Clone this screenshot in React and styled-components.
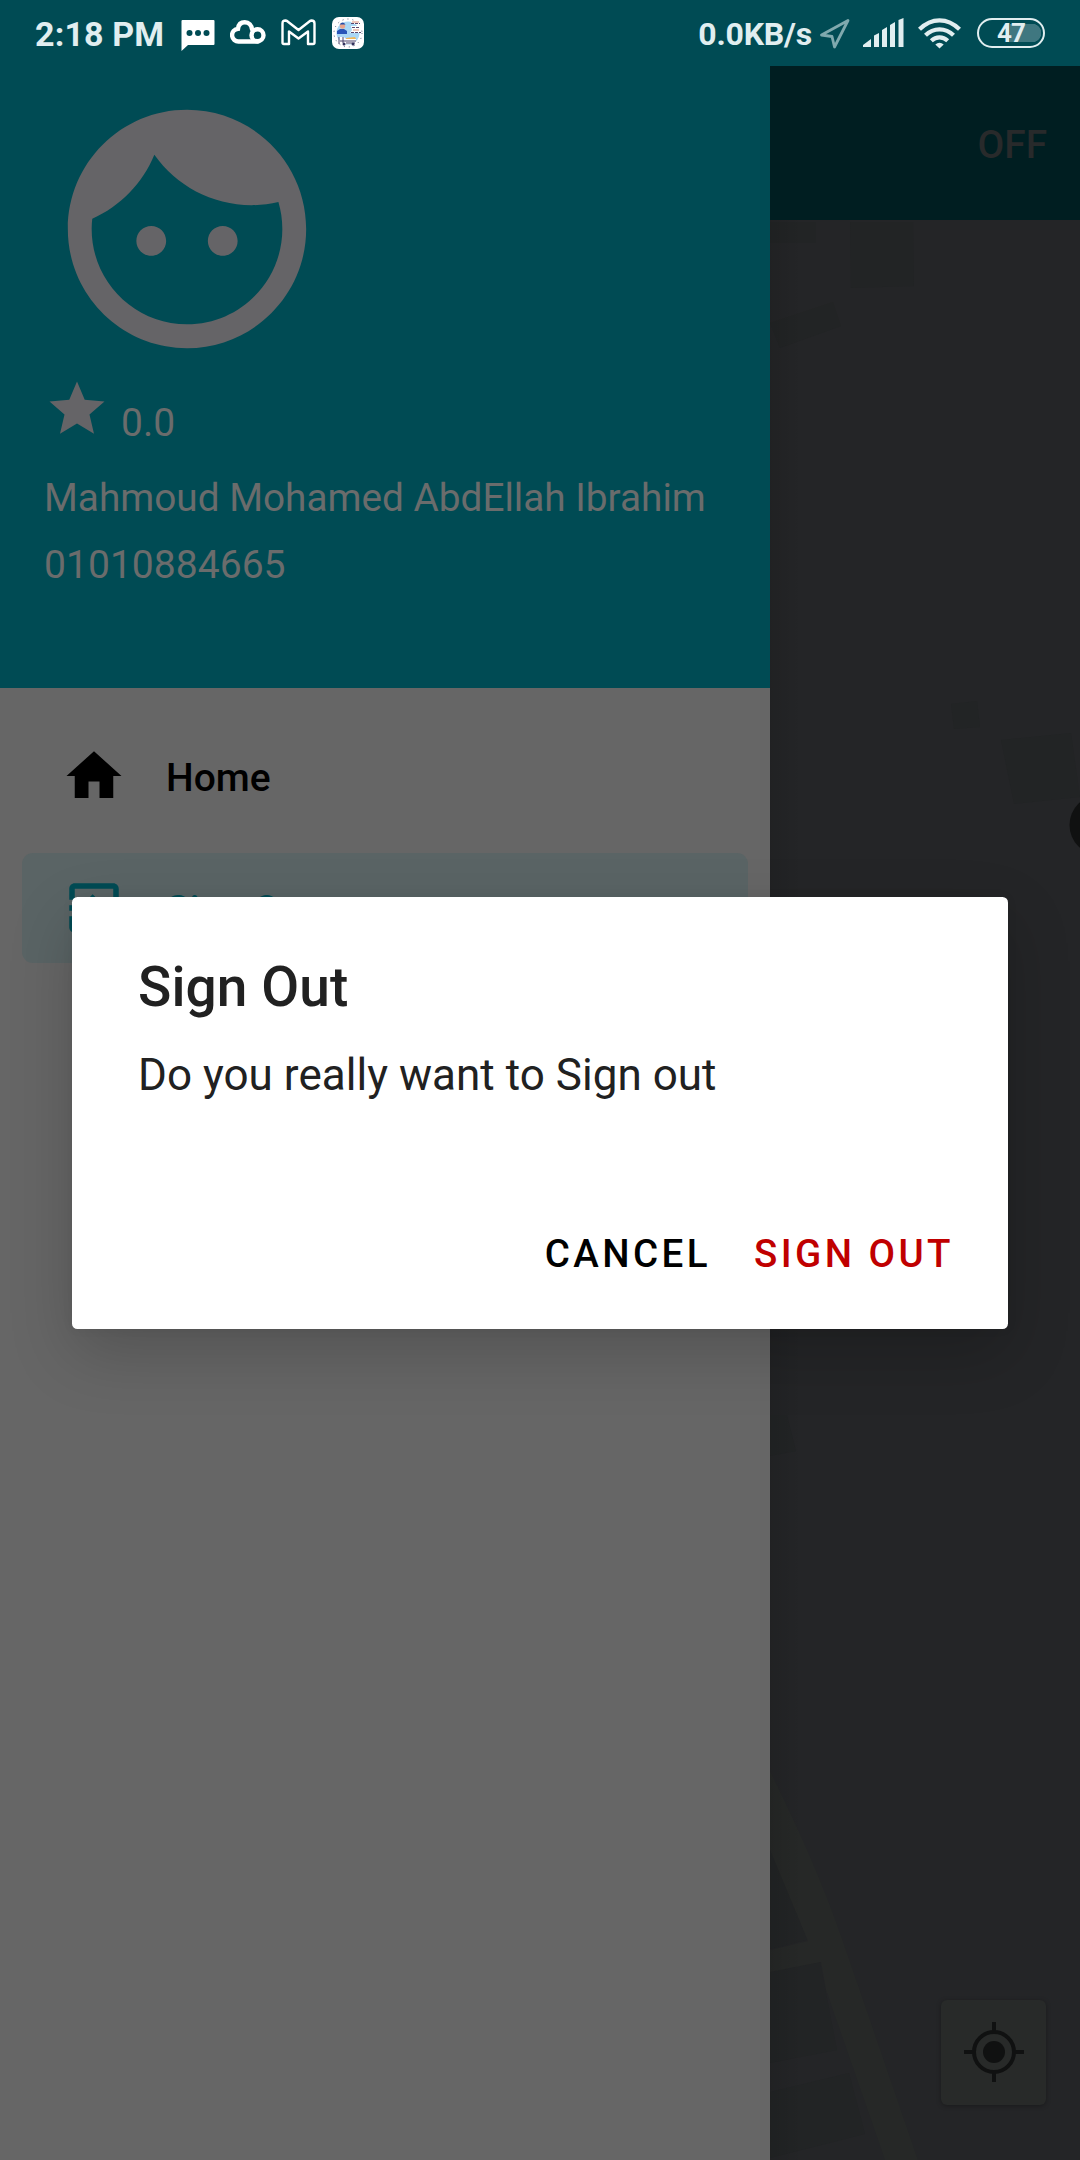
import React from "react";
import styled, { createGlobalStyle } from "styled-components";

const GlobalStyle = createGlobalStyle`
  * { box-sizing: border-box; }
  body { margin: 0; background: #242527; }
`;

const Screen = styled.div`
  position: relative;
  display: flex;
  flex-direction: column;
  width: 1080px;
  height: 2160px;
  overflow: hidden;
  background: #004b54;
  font-family: Roboto, "Noto Sans", sans-serif;
`;

const StatusBar = styled.header`
  display: flex;
  justify-content: space-between;
  height: 66px;
  padding: 0 35px 0 35px;
  color: #e1eef0;
`;

const StatusGroup = styled.div`
  display: flex;
  align-items: flex-start;
`;

const StatusText = styled.span`
  font-size: ${(p) => p.$size}px;
  font-weight: 700;
  line-height: 68px;
  letter-spacing: ${(p) => p.$spacing || 0}px;
  white-space: nowrap;
`;

const StatusIcon = styled.svg`
  display: block;
  flex: none;
  margin: ${(p) => p.$top}px 0 0 ${(p) => p.$left}px;
`;

const Battery = styled.div`
  display: flex;
  align-items: center;
  justify-content: center;
  width: 68px;
  height: 30px;
  margin: 18px 0 0 16px;
  border: 2.5px solid #e1eef0;
  border-radius: 15px;
  background: linear-gradient(#3f7780, #3f7780) 31px center / 22px 18px no-repeat,
    radial-gradient(circle at 50% 50%, #3f7780 0 9px, transparent 9.5px) 44px center / 18px 18px no-repeat;
  font-size: 26px;
  font-weight: 700;
  letter-spacing: -0.8px;
  line-height: 30px;
`;

const Body = styled.div`
  display: flex;
  flex: 1;
`;

const Drawer = styled.nav`
  display: flex;
  flex-direction: column;
  width: 770px;
  background: #666;
`;

const DrawerHeader = styled.div`
  display: flex;
  flex-direction: column;
  align-items: flex-start;
  height: 622px;
  padding: 20px 44px 0;
  background: #004b54;
  color: #6a6c6c;
  font-size: 39px;
  line-height: 45px;
`;

const Rating = styled.div`
  display: flex;
  align-items: flex-start;
  margin-top: 4px;
  height: 66px;
`;

const RatingValue = styled.span`
  margin: 25px 0 0 11px;
`;

const UserLine = styled.div`
  margin-top: ${(p) => p.$gap}px;
  font-size: ${(p) => p.$size}px;
  white-space: nowrap;
`;

const Menu = styled.div`
  display: flex;
  flex-direction: column;
  gap: 22px;
  padding: 33px 22px;
`;

const MenuItem = styled.div`
  display: flex;
  align-items: center;
  gap: 39px;
  height: 110px;
  padding-left: 39px;
  border-radius: 11px;
  background: ${(p) => (p.$active ? "#5a6465" : "transparent")};
  color: ${(p) => (p.$active ? "#004b54" : "#000")};
  font-size: 39px;
  font-weight: 500;
  line-height: 48px;
  svg { display: block; }
  span { padding-top: 3px; }
`;

const Page = styled.main`
  position: relative;
  display: flex;
  flex-direction: column;
  flex: 1;
`;

const Toolbar = styled.div`
  display: flex;
  align-items: center;
  justify-content: flex-end;
  height: 154px;
  padding: 2px 33px 0 0;
  background: #001e21;
  color: #282a2b;
  font-size: 38.8px;
  font-weight: 500;
`;

const MapCanvas = styled.svg`
  display: block;
  flex: 1;
  background: #242527;
`;

const DrawerShadow = styled.div`
  position: absolute;
  inset: 154px auto 0 0;
  width: 32px;
  background: linear-gradient(90deg, rgba(0, 0, 0, 0.1), transparent);
`;

const LocateButton = styled.button`
  position: absolute;
  right: 34px;
  bottom: 55px;
  display: flex;
  align-items: center;
  justify-content: center;
  width: 105px;
  height: 105px;
  padding: 0 0 2px;
  border: 0;
  border-radius: 6px;
  background: #282a29;
  box-shadow: 0 1px 5px rgba(0, 0, 0, 0.3);
`;

const DialogLayer = styled.div`
  position: absolute;
  inset: 66px 0 0;
  display: flex;
  align-items: center;
  justify-content: center;
`;

const Dialog = styled.section`
  display: flex;
  flex-direction: column;
  width: 936px;
  height: 432px;
  padding: 55px 54px 41px 66px;
  border-radius: 5.5px;
  background: #fff;
  color: #212121;
  box-shadow: 0 24px 64px rgba(0, 0, 0, 0.19), 0 0 12px rgba(0, 0, 0, 0.05);
`;

const DialogTitle = styled.h1`
  margin: 0;
  font-size: 55px;
  font-weight: 500;
  letter-spacing: 0.1px;
  line-height: 70px;
`;

const DialogMessage = styled.p`
  margin: 27px 0 0;
  font-size: 44px;
  letter-spacing: 0.03px;
  line-height: 52px;
`;

const DialogActions = styled.div`
  display: flex;
  justify-content: flex-end;
  gap: 43px;
  margin-top: auto;
`;

const DialogButton = styled.button`
  padding: 0;
  border: 0;
  background: none;
  color: ${(p) => (p.$danger ? "#c00000" : "#000")};
  font: 500 38.5px/68px Roboto, sans-serif;
  letter-spacing: 3.44px;
`;

const Glyph = ({ size, d, color = "currentColor" }) => (
  <svg width={size} height={size} viewBox="0 0 24 24" fill={color}>
    <path d={d} />
  </svg>
);

const FACE =
  "M9 11.75c-.69 0-1.25.56-1.25 1.25s.56 1.25 1.25 1.25 1.25-.56 1.25-1.25-.56-1.25-1.25-1.25zm6 0c-.69 0-1.25.56-1.25 1.25s.56 1.25 1.25 1.25 1.25-.56 1.25-1.25-.56-1.25-1.25-1.25zM12 2C6.48 2 2 6.48 2 12s4.48 10 10 10 10-4.48 10-10S17.52 2 12 2zm0 18c-4.41 0-8-3.59-8-8 0-.29.02-.58.05-.86 2.36-1.05 4.23-2.98 5.21-5.37C11.07 8.33 14.05 10 17.42 10c.78 0 1.53-.09 2.25-.26.21.71.33 1.47.33 2.26 0 4.41-3.59 8-8 8z";
const STAR =
  "M12 17.27L18.18 21l-1.64-7.03L22 9.24l-7.19-.61L12 2 9.19 8.63 2 9.24l5.46 4.73L5.82 21z";
const HOME = "M10 20v-6h4v6h5v-8h3L12 3 2 12h3v8z";
const EXIT =
  "M10.09 15.59L11.5 17l5-5-5-5-1.41 1.41L12.67 11H3v2h9.67l-2.58 2.59zM19 3H5c-1.11 0-2 .9-2 2v4h2V5h14v14H5v-4H3v4c0 1.1.89 2 2 2h14c1.1 0 2-.9 2-2V5c0-1.1-.9-2-2-2z";

function StatusLeft() {
  return (
    <StatusGroup>
      <StatusText $size={34} $spacing={0.15}>2:18 PM</StatusText>
      <StatusIcon $top={20} $left={17} width="34" height="32" viewBox="0 0 34 32">
        <path d="M1.5 0h31q1 0 1 1v23q0 1-1 1H7L.5 31V1q0-1 1-1z" fill="#fff" />
        <g fill="#004b54">
          <circle cx="8.5" cy="13" r="3" />
          <circle cx="17" cy="13" r="3" />
          <circle cx="25.5" cy="13" r="3" />
        </g>
      </StatusIcon>
      <StatusIcon $top={19} $left={15} width="36" height="26" viewBox="0 0 36 26">
        <g fill="none" stroke="#fff" strokeWidth="4.4">
          <path d="M28 22.5H9a6.4 6.4 0 0 1-1-12.8C8.5 5 11.5 3.2 14.8 3.2c4.2 0 6.7 3 7.2 7" strokeLinecap="round" />
          <circle cx="27.5" cy="16.3" r="6" />
        </g>
      </StatusIcon>
      <StatusIcon $top={19} $left={15} width="35" height="27" viewBox="0 0 35 27">
        <path
          d="M1.5 4.5Q1.5 1.5 4.5 1.5L6 2 17.5 11 29 2l1.5-.5q3 0 3 3v19q0 1.5-1.5 1.5h-5V12.5L17.5 19.5 8 12.5V25H3q-1.5 0-1.5-1.5z"
          fill="none"
          stroke="#fff"
          strokeWidth="2.4"
          strokeLinejoin="round"
        />
      </StatusIcon>
      <StatusIcon $top={17} $left={16} width="32" height="32" viewBox="0 0 32 32">
        <rect width="32" height="32" rx="7" fill="#fff" />
        <circle cx="16" cy="16" r="11.5" fill="#a9d7f6" />
        <circle cx="16" cy="16" r="14" fill="none" stroke="#59617e" strokeWidth="1" strokeDasharray="1 4" />
        <path d="M5 17v-3l3-2h4l3 2v3z" fill="#2855b8" />
        <circle cx="10.5" cy="9" r="2.7" fill="#e8a48e" />
        <path d="M7.5 7.5q3-4 6 0z" fill="#254da5" />
        <path d="M19 4h9v3h-8zM19 9h10v7H18l2-3z" fill="#fff" />
        <path d="M19 6.5h9M20 10.5h8M19 15.5h10" stroke="#59476e" strokeDasharray="3 1" />
        <path d="M20 5h7M21 13h6" stroke="#dd9079" />
        <path d="M7 20h5l2 2h10v5H8z" fill="#fff" />
        <path d="M14 21l9-1 1 2H14z" fill="#f2b756" />
        <path d="M7 20v7M11 20v6M8 24h16M14 26h9" stroke="#4b456d" />
        <circle cx="12" cy="27" r="1.5" fill="#34345e" />
        <circle cx="21" cy="27" r="1.5" fill="#34345e" />
      </StatusIcon>
    </StatusGroup>
  );
}

function StatusRight() {
  return (
    <StatusGroup>
      <StatusText $size={32} $spacing={-0.2}>0.0KB/s</StatusText>
      <StatusIcon $top={18} $left={7} width="32" height="32" viewBox="0 0 32 32">
        <path d="M29 2.5L2.5 17l10.5 1.5L15.5 29z" fill="none" stroke="#80a9ae" strokeWidth="2.8" strokeLinejoin="round" />
      </StatusIcon>
      <StatusIcon $top={18} $left={12} width="41" height="29" viewBox="0 0 41 29" fill="#e1eef0">
        <path d="M0 29v-2l8-6v8zM11 29V17.5l5-2.5v14zM19 29V12l5-3v20zM27 29V7l5-3v25zM35.5 29V2L40.5 0v29z" />
      </StatusIcon>
      <StatusIcon $top={18} $left={14} width="43" height="31" viewBox="0 0 43 31">
        <g fill="none" stroke="#e1eef0" strokeWidth="4.2">
          <path d="M1.5 11.3Q10.5 2.3 21.5 2.3T41.5 11.3" />
          <path d="M7.5 17.3Q13.5 11.3 21.5 11.3T35.5 17.3" />
          <path d="M13.3 22.8Q17 19.3 21.5 19.3T29.7 22.8" />
        </g>
        <path d="M17.3 26.5q4.2-3.5 8.4 0L21.5 30.5z" fill="#e1eef0" />
      </StatusIcon>
      <Battery>47</Battery>
    </StatusGroup>
  );
}

function MapView() {
  return (
    <MapCanvas width="310" height="1940" viewBox="0 220 310 1940">
      <g fill="#222425">
        <path d="M0 222h46v21H0zM80 222h63l1 64-63 2zM0 323l63-21 8 24-61 22z" />
        <path d="M181 704l26-3 3 26-26 2zM231 740l70-7 9 64-66 7zM0 1415h17l9 36-26 5z" />
        <path d="M0 1845l37 95-37 9zM0 1971l50-9 17 88-67 13zM0 2092l79-19 16 61-95 24z" />
      </g>
      <path d="M0 1771c52 105 68 155 88 214l60 175h-33L56 1990l-5-28-51 10v-22l38-9L0 1850z" fill="#262827" />
      <circle cx="329.5" cy="825" r="30" fill="#101111" />
    </MapCanvas>
  );
}

export default function App() {
  return (
    <Screen>
      <GlobalStyle />
      <StatusBar>
        <StatusLeft />
        <StatusRight />
      </StatusBar>
      <Body>
        <Drawer>
          <DrawerHeader>
            <Glyph size={286} d={FACE} color="#656467" />
            <Rating>
              <Glyph size={66} d={STAR} color="#656467" />
              <RatingValue>0.0</RatingValue>
            </Rating>
            <UserLine $gap={33} $size={38.75}>Mahmoud Mohamed AbdEllah Ibrahim</UserLine>
            <UserLine $gap={23} $size={39.1}>01010884665</UserLine>
          </DrawerHeader>
          <Menu>
            <MenuItem>
              <Glyph size={66} d={HOME} />
              <span>Home</span>
            </MenuItem>
            <MenuItem $active>
              <Glyph size={66} d={EXIT} />
              <span>Sign Out</span>
            </MenuItem>
          </Menu>
        </Drawer>
        <Page>
          <Toolbar>OFF</Toolbar>
          <MapView />
          <DrawerShadow />
          <LocateButton>
            <svg width="60" height="60" viewBox="0 0 60 60">
              <circle cx="30" cy="30" r="11" fill="#101111" />
              <g fill="none" stroke="#101111" strokeWidth="4">
                <circle cx="30" cy="30" r="20" />
                <path d="M30 0v9M30 51v9M0 30h9M51 30h9" />
              </g>
            </svg>
          </LocateButton>
        </Page>
      </Body>
      <DialogLayer>
        <Dialog>
          <DialogTitle>Sign Out</DialogTitle>
          <DialogMessage>Do you really want to Sign out</DialogMessage>
          <DialogActions>
            <DialogButton>CANCEL</DialogButton>
            <DialogButton $danger>SIGN OUT</DialogButton>
          </DialogActions>
        </Dialog>
      </DialogLayer>
    </Screen>
  );
}
